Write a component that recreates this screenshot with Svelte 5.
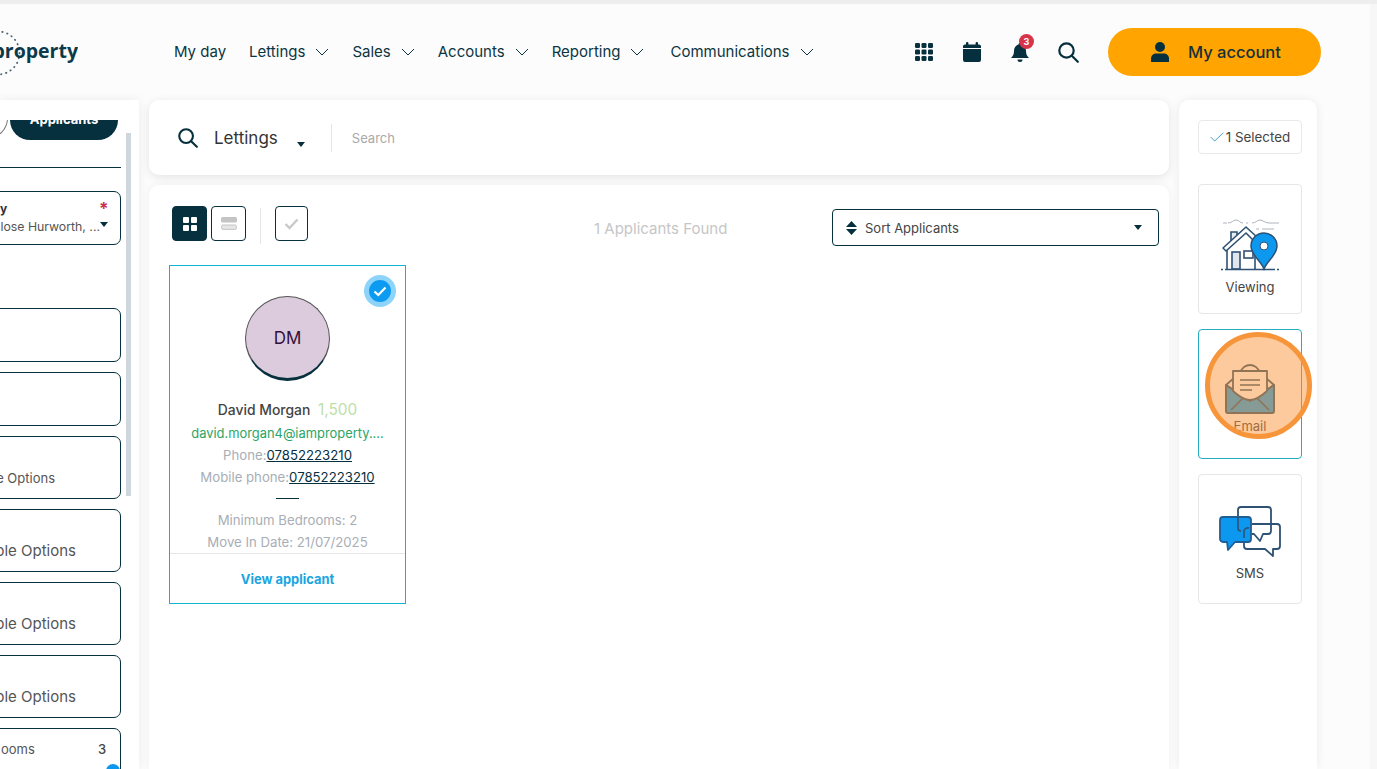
<script>
  const nav = [
    { label: 'My day', caret: false },
    { label: 'Lettings', caret: true },
    { label: 'Sales', caret: true },
    { label: 'Accounts', caret: true },
    { label: 'Reporting', caret: true },
    { label: 'Communications', caret: true }
  ];
</script>

<div class="page">
  <div class="strip"></div>
  <header>
    <div class="logo">
      <svg class="ring" width="60" height="50" viewBox="0 0 60 50">
        <circle cx="-2" cy="24" r="21.500" fill="none" stroke="#4d6a76" stroke-width="1.800" stroke-linecap="round" stroke-dasharray="0.400 4.600"/>
      </svg>
      <span class="logotext">property</span>
    </div>
    <nav>
      {#each nav as n}
        <span class="navitem">{n.label}{#if n.caret}<svg class="chev" width="14" height="8" viewBox="0 0 14 8"><path d="M1 1l6 6 6-6" fill="none" stroke="#0a3240" stroke-width="1"/></svg>{/if}</span>
      {/each}
    </nav>
    <div class="tools">
      <svg class="t1" width="18" height="18" viewBox="0 0 18 18" fill="#06303e">
        {#each [0, 6.5, 13] as y}{#each [0, 6.5, 13] as x}<rect x={x} y={y} width="5" height="5" rx="1.300"/>{/each}{/each}
      </svg>
      <svg class="t2" width="18" height="20" viewBox="0 0 18 20" fill="#06303e">
        <rect x="3" y="0" width="2.400" height="4" rx="1"/><rect x="12.600" y="0" width="2.400" height="4" rx="1"/>
        <path d="M0 4.500a2 2 0 0 1 2-2h14a2 2 0 0 1 2 2V6H0zM0 7h18v11a2 2 0 0 1-2 2H2a2 2 0 0 1-2-2z"/>
      </svg>
      <span class="bell">
        <svg width="20" height="21" viewBox="0 0 20 21" fill="#06303e">
          <path d="M10 1a1.400 1.400 0 0 1 1.400 1.600C14.600 3.300 16 6 16 9c0 3.600 1 5 3 7H1c2-2 3-3.400 3-7 0-3 1.400-5.700 4.600-6.400A1.400 1.400 0 0 1 10 1zM7.500 17.500h5a2.500 2.500 0 0 1-5 0z"/>
        </svg>
        <b>3</b>
      </span>
      <svg class="t4" width="21" height="21" viewBox="0 0 21 21" fill="none" stroke="#06303e" stroke-width="2.200">
        <circle cx="8.500" cy="8.500" r="7.200"/><path d="M13.800 13.800l6 6" stroke-linecap="round"/>
      </svg>
    </div>
    <div class="account">
      <svg width="18" height="20" viewBox="0 0 18 20" fill="#06303e"><circle cx="9" cy="5" r="5"/><path d="M0 20v-3.500C0 13.500 2.500 11.500 5 11.500h8c2.500 0 5 2 5 5V20z"/></svg>
      <span>My account</span>
    </div>
  </header>

  <div class="main">
    <aside class="left">
      <div class="pills">
        <span class="pillo"></span>
        <span class="pill">Applicants</span>
      </div>
      <div class="rule"></div>
      <div class="field first">
        <b class="flabel">y</b><i class="req">*</i>
        <div class="fval"><span>lose Hurworth, ...</span><em class="caret"></em></div>
      </div>
      <div class="spacer"></div>
      <div class="field"></div>
      <div class="field"></div>
      <div class="field tall small"><span>e Options</span></div>
      <div class="field tall"><span>ple Options</span></div>
      <div class="field tall"><span>ple Options</span></div>
      <div class="field tall"><span>ple Options</span></div>
      <div class="field last">
        <span>ooms</span><strong>3</strong>
        <em class="dot"></em>
      </div>
      <div class="scrollbar"></div>
    </aside>

    <section class="center">
      <div class="searchcard">
        <svg width="20" height="20" viewBox="0 0 21 21" fill="none" stroke="#06303e" stroke-width="2.200">
          <circle cx="8.500" cy="8.500" r="7.200"/><path d="M13.800 13.800l6 6" stroke-linecap="round"/>
        </svg>
        <span class="lettings">Lettings</span>
        <em class="caret low"></em>
        <span class="vsep"></span>
        <span class="searchph">Search</span>
      </div>
      <div class="results">
        <div class="toolbar">
          <span class="tbtn dark">
            <svg width="14" height="14" viewBox="0 0 14 14" fill="#fff"><rect width="6" height="6" rx="1"/><rect x="8" width="6" height="6" rx="1"/><rect y="8" width="6" height="6" rx="1"/><rect x="8" y="8" width="6" height="6" rx="1"/></svg>
          </span>
          <span class="tbtn">
            <svg width="16" height="13" viewBox="0 0 16 13"><rect width="16" height="5.500" rx="1.500" fill="#c4c4c4"/><rect x=".6" y="8" width="14.800" height="4.400" rx="1.500" fill="#e6e6e6" stroke="#c4c4c4"/></svg>
          </span>
          <span class="tsep"></span>
          <span class="tbtn chk">
            <svg width="15" height="12" viewBox="0 0 15 12"><path d="M1.500 6l4 4 8-8.500" fill="none" stroke="#c9c9c9" stroke-width="2.400"/></svg>
          </span>
          <span class="found">1 Applicants Found</span>
          <div class="sort">
            <svg width="11" height="14" viewBox="0 0 11 14" fill="#06303e"><path d="M5.500 0L11 6H0zM5.500 14L0 8h11z"/></svg>
            <span>Sort Applicants</span>
            <em class="caret"></em>
          </div>
        </div>
        <div class="applicant">
          <span class="badge">
            <svg width="14" height="11" viewBox="0 0 14 11"><path d="M1.500 5.500l3.800 3.500 7.200-7.500" fill="none" stroke="#fff" stroke-width="2.200"/></svg>
          </span>
          <div class="avatar">DM</div>
          <div class="name">David Morgan <span>1,500</span></div>
          <div class="email">david.morgan4@iamproperty....</div>
          <div class="line">Phone:<u>07852223210</u></div>
          <div class="line">Mobile phone:<u>07852223210</u></div>
          <div class="dash"></div>
          <div class="line">Minimum Bedrooms: 2</div>
          <div class="line">Move In Date: 21/07/2025</div>
          <div class="view">View applicant</div>
        </div>
      </div>
    </section>

    <aside class="right">
      <div class="selected">
        <svg width="14" height="10" viewBox="0 0 14 10"><path d="M.7 5l4 4L13.300.7" fill="none" stroke="#4aa3c4" stroke-width="1"/></svg>
        <span>1 Selected</span>
      </div>
      <div class="action one">
        <svg width="60" height="58" viewBox="0 0 60 58">
          <path d="M3 7h4M8 7c4 0 5-3 8-3s4 3 7 3M26 7h2M32 7c4 0 5-3 8-3s5 3 9 3h10M36 13h3M42 13h12" fill="none" stroke="#aeb4bc" stroke-width="1"/>
          <path d="M11 28V16h6v6" fill="#e7ecf2" stroke="#2f5173" stroke-width="1.600"/>
          <path d="M3 32L26 11l12 11-3 4-9-9L6 35z" fill="#fff" stroke="#2f5173" stroke-width="1.600" stroke-linejoin="round"/>
          <path d="M7 34v19M35 30v23" fill="none" stroke="#2f5173" stroke-width="1.600"/>
          <rect x="12" y="36" width="8" height="17" fill="#e1e6ee" stroke="#2f5173" stroke-width="1.600"/>
          <rect x="24" y="35" width="9" height="7" fill="#fff" stroke="#2f5173" stroke-width="1.600"/>
          <path d="M1 53.500h59" stroke="#2f5173" stroke-width="1.600" stroke-dasharray="2 2 50 2 2"/>
          <path d="M44 53c-3-8-13-14-13-23a13 13 0 0 1 26 0c0 9-10 15-13 23z" fill="#0d98ef" stroke="#2f5173" stroke-width="1.500"/>
          <circle cx="44" cy="30" r="4" fill="#fff" stroke="#2f5173" stroke-width="1"/>
        </svg>
        <span>Viewing</span>
      </div>
      <div class="action two">
        <svg width="50" height="52" viewBox="0 0 50 52">
          <path d="M1 22l8-7 10-11q6-4 12 0l10 11 8 7-24 16z" fill="#fff" stroke="#28506e" stroke-width="1.800" stroke-linejoin="round"/>
          <path d="M1 22l24 16 24-16v26a2 2 0 0 1-2 2H3a2 2 0 0 1-2-2z" fill="#12a1ef" stroke="#28506e" stroke-width="2" stroke-linejoin="round"/>
          <path d="M6 47l13-13M44 47L31 34" stroke="#28506e" stroke-width="1.600"/>
          <path d="M8 8h34v20q-10 9-17 9T8 28z" fill="#fff" stroke="#28506e" stroke-width="1.800" stroke-linejoin="round"/>
          <path d="M15 17h20M15 22h20M15 27h12" stroke="#28506e" stroke-width="1.600"/>
        </svg>
        <span>Email</span>
      </div>
      <div class="action three">
        <svg width="62" height="52" viewBox="0 0 62 52">
          <path d="M19 12V4a3 3 0 0 1 3-3h27a3 3 0 0 1 3 3v21a3 3 0 0 1-3 3h-5l-3 7-6-7h-2" fill="none" stroke="#2f5173" stroke-width="1.800" stroke-linejoin="round"/>
          <path d="M33 18h25a3 3 0 0 1 3 3v19a3 3 0 0 1-3 3h-4v7l-8-7H28a3 3 0 0 1-3-3v-8" fill="none" stroke="#2f5173" stroke-width="1.800" stroke-linejoin="round"/>
          <path d="M4 11h25a3 3 0 0 1 3 3v19a3 3 0 0 1-3 3H16l-7 8-1-8H4a3 3 0 0 1-3-3V14a3 3 0 0 1 3-3z" fill="#0d98ef" stroke="#1f5f96" stroke-width="1.800" stroke-linejoin="round"/>
          <path d="M19 11v11a3 3 0 0 0 3 3M25 32v-7a4 4 0 0 1 5-3" fill="none" stroke="#2f5173" stroke-width="1.600"/>
        </svg>
        <span>SMS</span>
      </div>
      <div class="spot"></div>
    </aside>
  </div>
</div>

<style>
  :global(body) { margin: 0; background: #fcfcfc; }
  .page {
    height: 769px; width: 1377px; overflow: hidden; position: relative;
    font-family: "Inter", "Liberation Sans", sans-serif; color: #06303e;
    background: linear-gradient(90deg, #fcfcfc 1370px, #f7f7f7 1370px);
  }
  .strip { height: 4px; background: #eeeeee; }
  header { height: 96px; display: flex; align-items: center; }
  .logo { width: 78px; height: 50px; position: relative; display: flex; align-items: center; justify-content: flex-end; overflow: hidden; flex: none; }
  .ring { position: absolute; left: 0; top: 2px; }
  .logotext { font: 700 19.500px "Open Sans", sans-serif; color: #0c3a4a; position: relative; top: -2px; white-space: nowrap; }
  nav { display: flex; margin-left: 96px; gap: 23px; font-size: 15px; width: 694px; flex: none; margin-top: -2px; }
  .navitem { display: inline-flex; align-items: center; white-space: nowrap; color: #0c3542; }
  .navitem:last-child { margin-left: 3px; }
  .chev { margin-left: 10px; margin-top: 2px; }
  .tools { display: flex; align-items: center; flex: none; margin-left: 47px; }
  .t1 { margin-right: 30px; }
  .t2 { margin-right: 29px; }
  .bell { position: relative; display: block; width: 20px; height: 21px; margin-right: 28px; }
  .bell b { position: absolute; left: 9px; top: -8px; width: 15px; height: 15px; border-radius: 50%; background: #d63549; color: #fff; font-size: 9px; line-height: 15px; text-align: center; }
  .account { margin-left: 29px; width: 213px; height: 48px; border-radius: 24px; background: #ffa400; display: flex; align-items: center; gap: 19px; padding-left: 43px; box-sizing: border-box; font-size: 16.500px; font-weight: 500; color: #14303a; flex: none; }
  .main { display: flex; align-items: flex-start; height: 669px; }
  aside { background: #fff; box-shadow: 0 0 10px rgba(0,0,0,.07); flex: none; }
  .left { width: 139px; height: 669px; position: relative; overflow: hidden; }
  .pills { margin-top: 20px; height: 20px; overflow: hidden; position: relative; }
  .pill { position: absolute; left: 10px; top: -20px; width: 108px; height: 40px; background: #06303e; color: #fff; border-radius: 0 0 20px 20px; font-size: 13px; font-weight: 700; text-align: center; line-height: 18px; box-sizing: border-box; padding-top: 10px; }
  .pillo { position: absolute; left: -30px; top: -22px; width: 36px; height: 38px; border: 1px solid #777; border-radius: 50%; }
  .rule { height: 1px; width: 121px; background: #06303e; margin-top: 27px; }
  .field { margin-left: -20px; width: 141px; height: 54px; box-sizing: border-box; border: 1px solid #06303e; border-radius: 7px; margin-top: 10px; color: #555; position: relative; font-size: 15px; }
  .first { margin-top: 23px; font-size: 12.300px; display: flex; flex-direction: column; padding: 9px 12px 0 0; }
  .flabel { position: absolute; left: 19px; top: 9px; font-size: 12px; color: #333; font-weight: 700; }
  .req { position: absolute; left: 118px; top: 7px; color: #c8324a; font-style: normal; font-weight: 700; font-size: 17px; line-height: 20px; }
  .fval { margin-top: 18px; display: flex; justify-content: flex-end; align-items: center; white-space: nowrap; line-height: 16px; }
  .caret { display: block; width: 0; height: 0; flex: none; border-left: 4.500px solid transparent; border-right: 4.500px solid transparent; border-top: 5px solid #06303e; }
  .fval .caret { margin-top: -5px; }
  .spacer { height: 53px; }
  .tall { height: 63px; display: flex; align-items: flex-end; justify-content: flex-end; padding: 0 44px 11px 0; white-space: nowrap; }
  .small { font-size: 13px; padding: 0 65px 12px 0; }
  .last { height: 80px; font-size: 13px; }
  .last span { position: absolute; left: 20px; top: 12px; }
  .last strong { position: absolute; left: 117px; top: 12px; font-weight: 500; color: #444; }
  .dot { position: absolute; left: 125px; top: 35px; width: 14px; height: 14px; border-radius: 50%; background: #0d98ef; }
  .scrollbar { position: absolute; left: 126px; top: 33px; width: 5px; height: 363px; background: #cfd6dc; }
  .center { margin-left: 10px; width: 1020px; flex: none; display: flex; flex-direction: column; gap: 10px; }
  .searchcard { height: 75px; background: #fff; border-radius: 10px; box-shadow: 0 2px 10px rgba(0,0,0,.1); display: flex; align-items: center; padding-left: 29px; box-sizing: border-box; }
  .lettings { margin-left: 16px; font-size: 17px; color: #333; }
  .caret.low { margin-left: 19px; margin-top: 13px; }
  .vsep { width: 1px; height: 28px; background: #e4e4e4; margin-left: 26px; }
  .searchph { margin-left: 20px; font-size: 13px; color: #a9a9a9; }
  .results { background: #fff; border-radius: 10px 10px 0 0; height: 584px; padding: 21px 10px 0 20px; box-sizing: border-box; box-shadow: 0 0 10px rgba(0,0,0,.05); }
  .toolbar { display: flex; align-items: flex-start; height: 59px; }
  .tbtn { width: 35px; height: 35px; box-sizing: border-box; border: 1px solid #06303e; border-radius: 4px; display: flex; align-items: center; justify-content: center; margin-left: 3px; margin-right: 1px; }
  .tbtn.dark { background: #06303e; }
  .tbtn.chk { width: 33px; margin: 0; }
  .tsep { width: 1px; height: 36px; background: #e4e4e4; margin: 2px 14px 0 13px; }
  .found { margin-left: 286px; margin-top: 13px; font-size: 15px; color: #c6c6c6; white-space: nowrap; width: 238px; }
  .sort { width: 327px; height: 37px; margin-top: 3px; box-sizing: border-box; border: 1px solid #06303e; border-radius: 4px; display: flex; align-items: center; padding: 0 16px 0 13px; font-size: 13px; color: #444; gap: 8px; }
  .sort span { flex: 1; }
  .applicant { width: 237px; height: 339px; box-sizing: border-box; box-shadow: inset 0 0 0 1px #12b5ce; position: relative; display: flex; flex-direction: column; align-items: center; font-size: 13.200px; color: #a8aeb5; text-align: center; white-space: nowrap; padding-top: 1px; }
  .badge { position: absolute; right: 10px; top: 10px; width: 22px; height: 22px; border-radius: 50%; background: #0d9bf2; border: 5px solid #8dd3fa; display: flex; align-items: center; justify-content: center; }
  .avatar { width: 85px; height: 85px; box-sizing: border-box; margin-top: 30px; border-radius: 50%; background: #dccbdc; color: #33103d; font-size: 17px; display: flex; align-items: center; justify-content: center; border: 1px solid #555; border-bottom: 3px solid #06303e; flex: none; }
  .name { margin-top: 17px; height: 24.500px; line-height: 23px; font-size: 13.900px; font-weight: 500; color: #444; }
  .name span { color: #bde0a8; font-size: 15.400px; margin-left: 4px; font-weight: 400; }
  .email { color: #2ca566; height: 21.500px; line-height: 22px; font-size: 12.900px; }
  .line { height: 22px; line-height: 22px; }
  .line u { color: #06303e; }
  .dash { width: 23px; height: 1px; background: #06303e; margin: 10px 0 10px; flex: none; }
  .view { position: absolute; left: 1px; right: 1px; bottom: 1px; height: 49px; line-height: 51px; border-top: 1px solid #e6e6e6; color: #1ba5e0; font-weight: 700; font-size: 12.900px; }
  .right { margin-left: 10px; width: 138px; height: 669px; border-radius: 10px 10px 0 0; padding: 20px 15px 0 19px; box-sizing: border-box; position: relative; display: flex; flex-direction: column; }
  .selected { height: 34px; box-sizing: border-box; border: 1px solid #e9e9e9; border-radius: 4px; display: flex; align-items: center; justify-content: center; gap: 2px; font-size: 13.400px; color: #444; white-space: nowrap; }
  .action { margin-top: 15px; height: 130px; box-sizing: border-box; border: 1px solid #e6e6e6; border-radius: 4px; display: flex; flex-direction: column; align-items: center; justify-content: flex-end; font-size: 13px; color: #444; }
  .action span { margin-bottom: 18px; margin-top: 5px; }
  .one { margin-top: 30px; }
  .two { border-color: #25adc2; }
  .two span { margin-bottom: 24px; margin-top: 3px; }
  .three span { margin-bottom: 22px; margin-top: 7px; }
  .spot { position: absolute; left: 26px; top: 232px; width: 107px; height: 107px; box-sizing: border-box; border-radius: 50%; border: 5px solid #f7953b; background: rgba(250,150,60,.5); }
</style>
